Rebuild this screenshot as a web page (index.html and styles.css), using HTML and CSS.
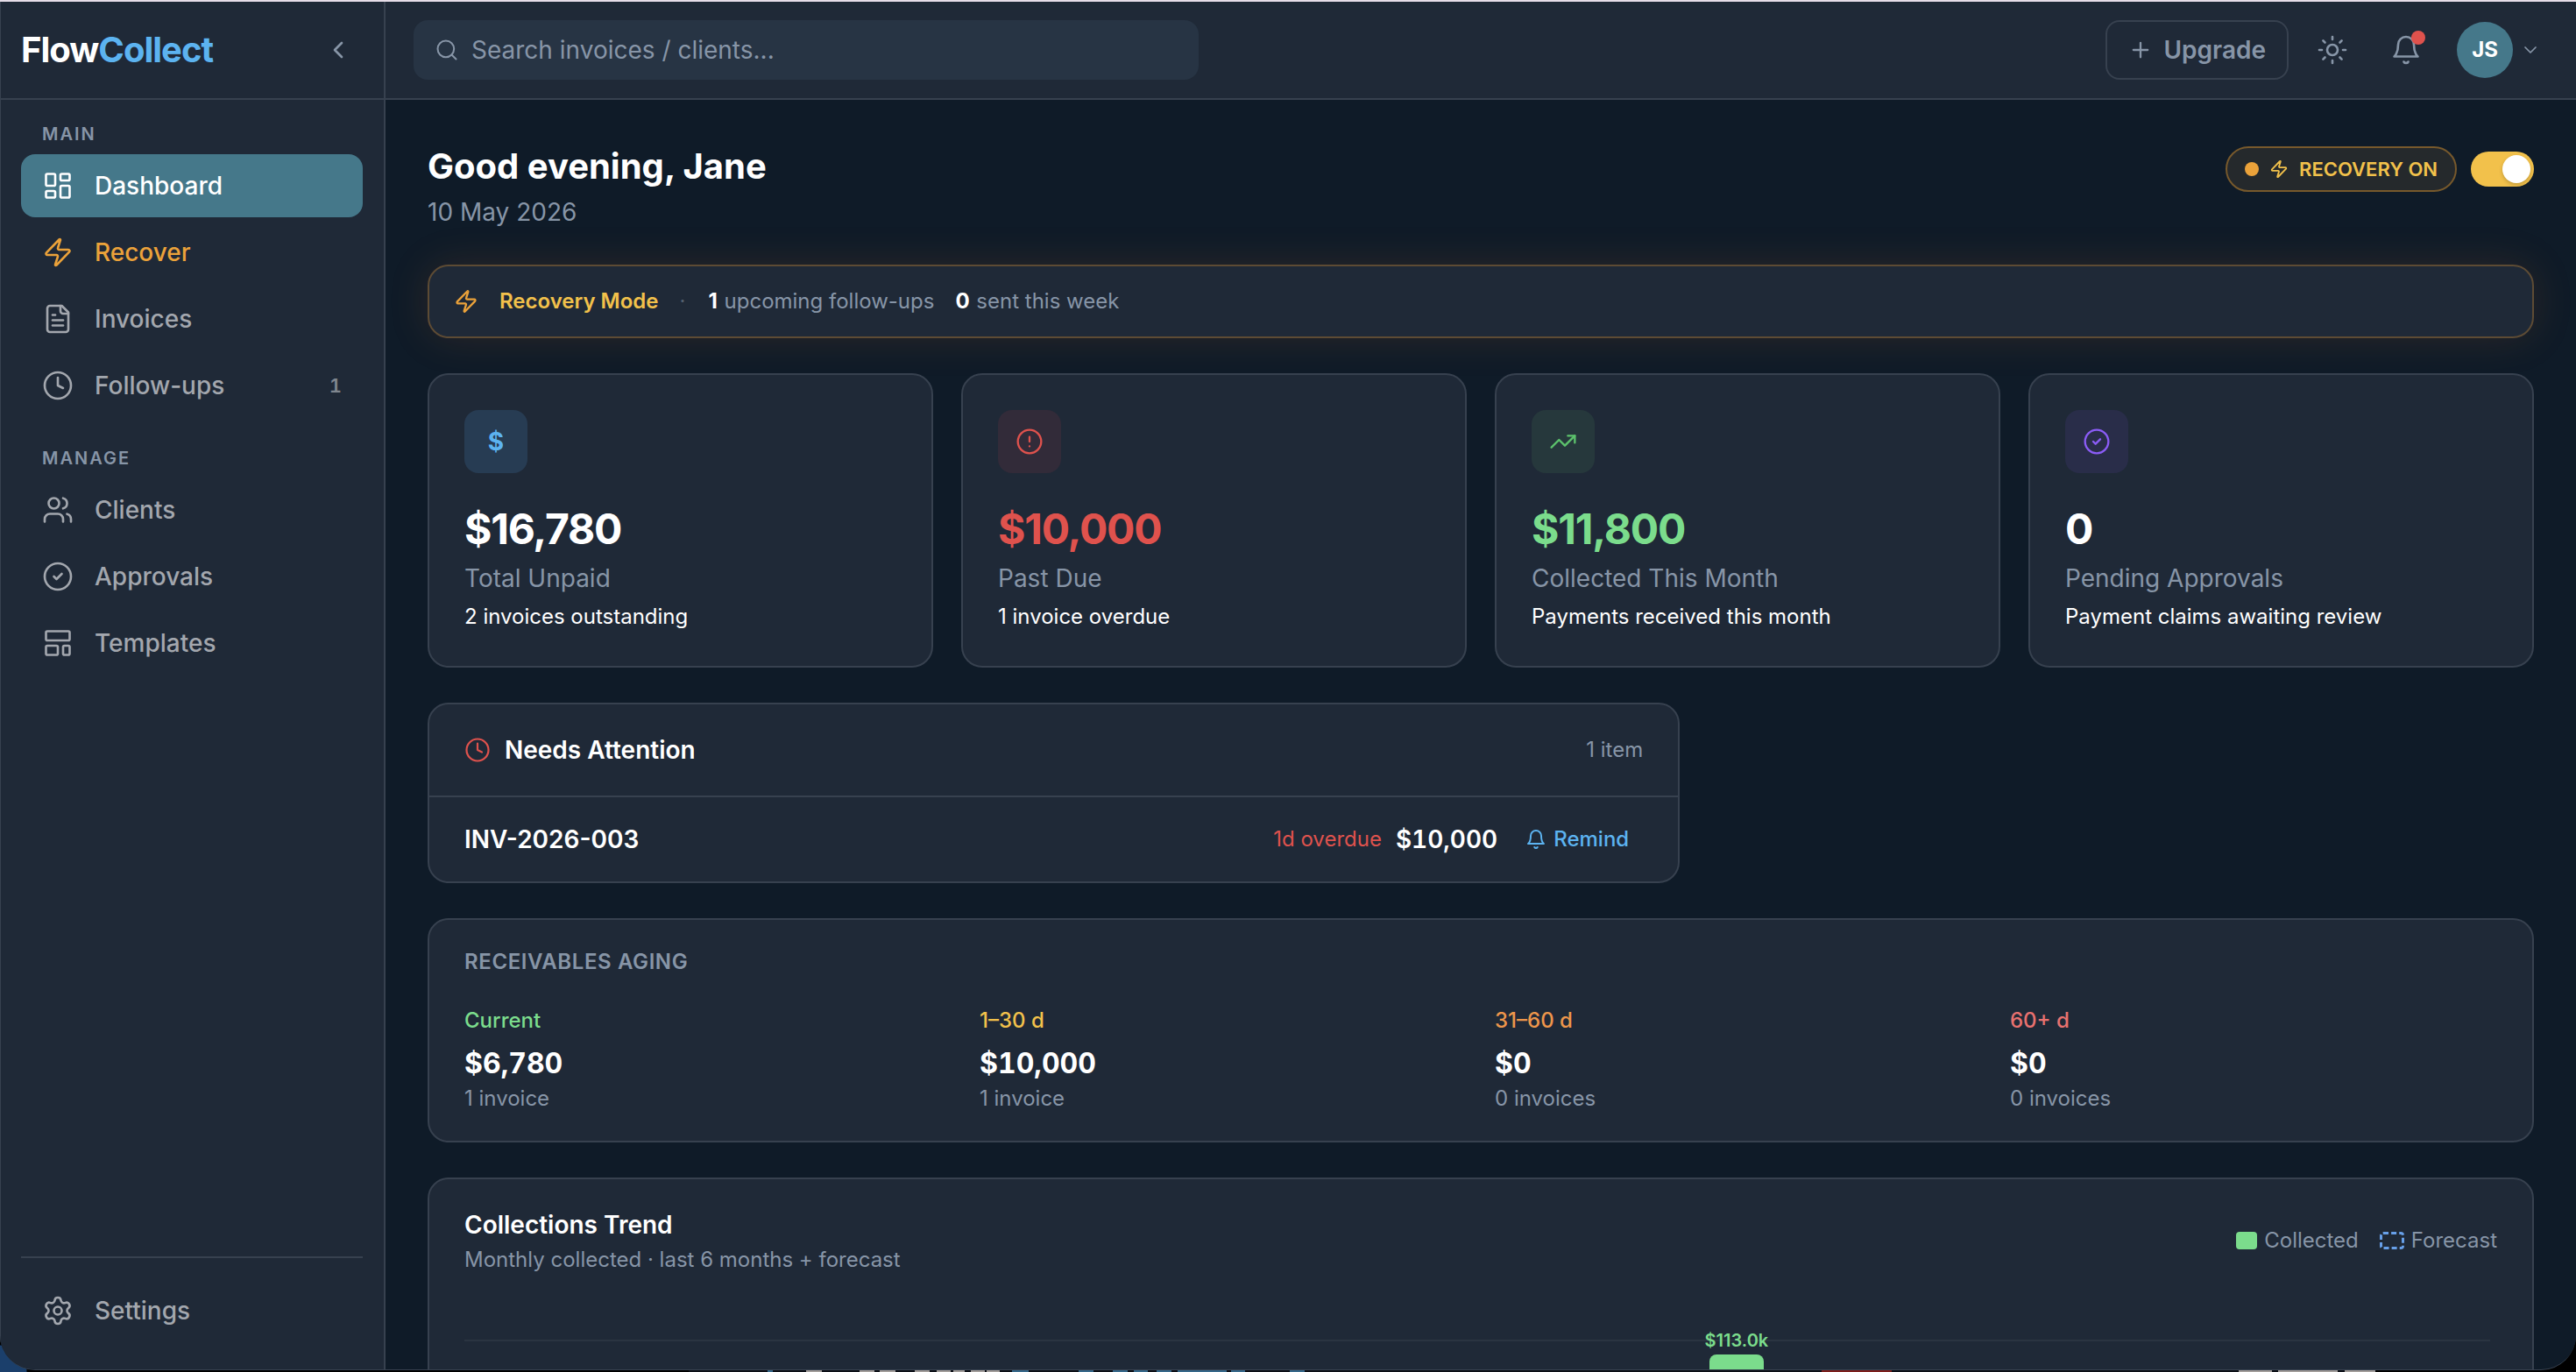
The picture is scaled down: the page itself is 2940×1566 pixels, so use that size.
FILE: index.html
```html
<!DOCTYPE html>
<html lang="en">
<head>
<meta charset="utf-8">
<meta name="viewport" content="width=device-width, initial-scale=1">
<title>FlowCollect – Dashboard</title>
<link rel="stylesheet" href="styles.css">
</head>
<body>
<svg class="sprite" aria-hidden="true">
  <symbol id="i-dashboard" viewBox="0 0 24 24"><rect x="3" y="3" width="7" height="9" rx="1"/><rect x="14" y="3" width="7" height="5" rx="1"/><rect x="14" y="12" width="7" height="9" rx="1"/><rect x="3" y="16" width="7" height="5" rx="1"/></symbol>
  <symbol id="i-zap" viewBox="0 0 24 24"><path d="M4 14a1 1 0 0 1-.78-1.63l9.9-10.2a.5.5 0 0 1 .86.46l-1.92 6.02A1 1 0 0 0 13 10h7a1 1 0 0 1 .78 1.63l-9.9 10.2a.5.5 0 0 1-.86-.46l1.92-6.02A1 1 0 0 0 11 14z"/></symbol>
  <symbol id="i-file" viewBox="0 0 24 24"><path d="M15 2H6a2 2 0 0 0-2 2v16a2 2 0 0 0 2 2h12a2 2 0 0 0 2-2V7Z"/><path d="M14 2v4a2 2 0 0 0 2 2h4"/><path d="M10 9H8"/><path d="M16 13H8"/><path d="M16 17H8"/></symbol>
  <symbol id="i-clock" viewBox="0 0 24 24"><circle cx="12" cy="12" r="10"/><path d="M12 6v6l4 2"/></symbol>
  <symbol id="i-users" viewBox="0 0 24 24"><path d="M16 21v-2a4 4 0 0 0-4-4H6a4 4 0 0 0-4 4v2"/><circle cx="9" cy="7" r="4"/><path d="M22 21v-2a4 4 0 0 0-3-3.87"/><path d="M16 3.13a4 4 0 0 1 0 7.75"/></symbol>
  <symbol id="i-check" viewBox="0 0 24 24"><circle cx="12" cy="12" r="10"/><path d="m9 12 2 2 4-4"/></symbol>
  <symbol id="i-template" viewBox="0 0 24 24"><rect x="3" y="3" width="18" height="7" rx="1"/><rect x="3" y="14" width="9" height="7" rx="1"/><rect x="16" y="14" width="5" height="7" rx="1"/></symbol>
  <symbol id="i-settings" viewBox="0 0 24 24"><path d="M9.671 4.136a2.34 2.34 0 0 1 4.659 0 2.34 2.34 0 0 0 3.319 1.915 2.34 2.34 0 0 1 2.33 4.033 2.34 2.34 0 0 0 0 3.831 2.34 2.34 0 0 1-2.33 4.033 2.34 2.34 0 0 0-3.319 1.915 2.34 2.34 0 0 1-4.659 0 2.34 2.34 0 0 0-3.32-1.915 2.34 2.34 0 0 1-2.33-4.033 2.34 2.34 0 0 0 0-3.831A2.34 2.34 0 0 1 6.35 6.051a2.34 2.34 0 0 0 3.319-1.915"/><circle cx="12" cy="12" r="3"/></symbol>
  <symbol id="i-left" viewBox="0 0 24 24"><path d="m15 18-6-6 6-6"/></symbol>
  <symbol id="i-down" viewBox="0 0 24 24"><path d="m6 9 6 6 6-6"/></symbol>
  <symbol id="i-search" viewBox="0 0 24 24"><circle cx="11" cy="11" r="8"/><path d="m21 21-4.3-4.3"/></symbol>
  <symbol id="i-plus" viewBox="0 0 24 24"><path d="M5 12h14M12 5v14"/></symbol>
  <symbol id="i-sun" viewBox="0 0 24 24"><circle cx="12" cy="12" r="4"/><path d="M12 2v2M12 20v2M4.93 4.93l1.41 1.41M17.66 17.66l1.41 1.41M2 12h2M20 12h2M6.34 17.66l-1.41 1.41M19.07 4.93l-1.41 1.41"/></symbol>
  <symbol id="i-bell" viewBox="0 0 24 24"><path d="M6 8a6 6 0 0 1 12 0c0 7 3 9 3 9H3s3-2 3-9"/><path d="M10.3 21a1.94 1.94 0 0 0 3.4 0"/></symbol>
  <symbol id="i-alert" viewBox="0 0 24 24"><circle cx="12" cy="12" r="10"/><path d="M12 8v4M12 16h.01"/></symbol>
  <symbol id="i-trend" viewBox="0 0 24 24"><path d="m22 7-8.500 8.500-5-5L2 17"/><path d="M16 7h6v6"/></symbol>
</svg>

<div class="window">
  <aside class="sidebar">
    <div class="brand-row">
      <a class="brand" href="#">Flow<span class="brand-accent">Collect</span></a>
      <button class="collapse" type="button" aria-label="Collapse sidebar"><svg class="icon icon-32 bold-stroke"><use href="#i-left"/></svg></button>
    </div>
    <nav class="nav">
      <section class="nav-group">
        <h2 class="nav-title">MAIN</h2>
        <a class="nav-item active" href="#"><svg class="icon icon-36"><use href="#i-dashboard"/></svg>Dashboard</a>
        <a class="nav-item recover" href="#"><svg class="icon icon-36"><use href="#i-zap"/></svg>Recover</a>
        <a class="nav-item" href="#"><svg class="icon icon-36"><use href="#i-file"/></svg>Invoices</a>
        <a class="nav-item" href="#"><svg class="icon icon-36"><use href="#i-clock"/></svg>Follow-ups<span class="count">1</span></a>
      </section>
      <section class="nav-group">
        <h2 class="nav-title">MANAGE</h2>
        <a class="nav-item" href="#"><svg class="icon icon-36"><use href="#i-users"/></svg>Clients</a>
        <a class="nav-item" href="#"><svg class="icon icon-36"><use href="#i-check"/></svg>Approvals</a>
        <a class="nav-item" href="#"><svg class="icon icon-36"><use href="#i-template"/></svg>Templates</a>
      </section>
    </nav>
    <div class="nav-foot">
      <a class="nav-item" href="#"><svg class="icon icon-36"><use href="#i-settings"/></svg>Settings</a>
    </div>
  </aside>

  <div class="page">
    <header class="topbar">
      <label class="search">
        <svg class="icon icon-28"><use href="#i-search"/></svg>
        <input class="search-input" type="text" placeholder="Search invoices / clients..." aria-label="Search invoices or clients">
      </label>
      <div class="actions">
        <button class="upgrade" type="button"><svg class="icon icon-28 bold-stroke"><use href="#i-plus"/></svg>Upgrade</button>
        <button class="icon-btn" type="button" aria-label="Theme"><svg class="icon icon-36"><use href="#i-sun"/></svg></button>
        <button class="icon-btn" type="button" aria-label="Notifications"><svg class="icon icon-36"><use href="#i-bell"/></svg><span class="dot-badge"></span></button>
        <button class="account" type="button" aria-label="Account"><span class="avatar">JS</span><svg class="icon icon-24"><use href="#i-down"/></svg></button>
      </div>
    </header>

    <main class="content">
      <div class="title-row">
        <div>
          <h1 class="greeting">Good evening, Jane</h1>
          <p class="date">10 May 2026</p>
        </div>
        <div class="recovery">
          <span class="pill"><span class="pill-dot"></span><svg class="icon icon-22 bold-stroke"><use href="#i-zap"/></svg>RECOVERY ON</span>
          <input class="switch" type="checkbox" role="switch" aria-label="Recovery mode" checked>
        </div>
      </div>

      <section class="banner">
        <svg class="icon icon-28 bold-stroke amber"><use href="#i-zap"/></svg>
        <strong class="banner-name">Recovery Mode</strong>
        <span class="banner-sep">·</span>
        <span><b>1</b> upcoming follow-ups</span>
        <span><b>0</b> sent this week</span>
      </section>

      <section class="stats">
        <article class="card stat">
          <div class="tile tile-blue">$</div>
          <p class="stat-value">$16,780</p>
          <p class="stat-label">Total Unpaid</p>
          <p class="stat-note">2 invoices outstanding</p>
        </article>
        <article class="card stat">
          <div class="tile tile-red"><svg class="icon icon-32"><use href="#i-alert"/></svg></div>
          <p class="stat-value red">$10,000</p>
          <p class="stat-label">Past Due</p>
          <p class="stat-note">1 invoice overdue</p>
        </article>
        <article class="card stat">
          <div class="tile tile-green"><svg class="icon icon-32"><use href="#i-trend"/></svg></div>
          <p class="stat-value green">$11,800</p>
          <p class="stat-label">Collected This Month</p>
          <p class="stat-note">Payments received this month</p>
        </article>
        <article class="card stat">
          <div class="tile tile-violet"><svg class="icon icon-32"><use href="#i-check"/></svg></div>
          <p class="stat-value">0</p>
          <p class="stat-label">Pending Approvals</p>
          <p class="stat-note">Payment claims awaiting review</p>
        </article>
      </section>

      <section class="card attention">
        <div class="attention-head">
          <svg class="icon icon-30 red"><use href="#i-clock"/></svg>
          <h2 class="card-title">Needs Attention</h2>
          <span class="push muted">1 item</span>
        </div>
        <div class="attention-row">
          <a class="invoice" href="#">INV-2026-003</a>
          <span class="push red">1d overdue</span>
          <span class="amount">$10,000</span>
          <button class="remind" type="button"><svg class="icon icon-24 bold-stroke"><use href="#i-bell"/></svg>Remind</button>
        </div>
      </section>

      <section class="card aging">
        <h2 class="aging-title">RECEIVABLES AGING</h2>
        <div class="aging-grid">
          <div><p class="bucket green">Current</p><p class="bucket-value">$6,780</p><p class="muted">1 invoice</p></div>
          <div><p class="bucket yellow">1–30 d</p><p class="bucket-value">$10,000</p><p class="muted">1 invoice</p></div>
          <div><p class="bucket orange">31–60 d</p><p class="bucket-value">$0</p><p class="muted">0 invoices</p></div>
          <div><p class="bucket rose">60+ d</p><p class="bucket-value">$0</p><p class="muted">0 invoices</p></div>
        </div>
      </section>

      <section class="card trend">
        <div class="trend-head">
          <div>
            <h2 class="card-title">Collections Trend</h2>
            <p class="trend-sub">Monthly collected · last 6 months + forecast</p>
          </div>
          <ul class="legend">
            <li class="legend-item"><span class="swatch"></span>Collected</li>
            <li class="legend-item"><span class="swatch-dashed"></span>Forecast</li>
          </ul>
        </div>
        <div class="chart">
          <div class="bar" style="left: 62.8%"><span class="bar-value">$113.0k</span><span class="bar-fill"></span></div>
        </div>
      </section>
    </main>
  </div>
</div>

<!-- Sliver of the desktop below the app window -->
<svg class="desktop-edge" viewBox="0 0 2940 2" preserveAspectRatio="none" aria-hidden="true">
  <rect class="edge-dark" x="786" width="1900" height="2"/>
  <path class="edge-grey" d="M920 0h18v2h-18zM981 0h17v2h-17zM1004 0h18v2h-18zM1044 0h17v2h-17zM1069 0h16v2h-16zM1088 0h13v2h-13zM1108 0h16v2h-16zM1126 0h15v2h-15zM2555 0h38v2h-38zM2600 0h68v2h-68zM2676 0h35v2h-35z"/>
  <path class="edge-blue" d="M876 0h6v2h-6zM1155 0h19v2h-19zM1231 0h17v2h-17zM1270 0h17v2h-17zM1294 0h16v2h-16zM1320 0h17v2h-17zM1344 0h56v2h-56zM1405 0h16v2h-16zM1472 0h17v2h-17z"/>
  <rect class="edge-red" x="2079" width="80" height="2"/>
</svg>
</body>
</html>
```
FILE: styles.css
```css
:root {
  --bg: #0f1b28;
  --surface: #1f2937;
  --line: #37414f;
  --muted: #8795a7;
  --nav: #a3a7ae;
  --white: #ffffff;
  --teal: #45788a;
  --blue: #5cb3f0;
  --amber: #eba23a;
  --yellow: #f2c14b;
  --red: #df524d;
  --green: #7bdc8c;
}

* { box-sizing: border-box; }

body {
  display: flex;
  flex-direction: column;
  margin: 0;
  height: 100vh;
  padding-top: 2px;
  overflow: hidden;
  background:
    linear-gradient(#e6dde8 0 2px, transparent 2px),
    radial-gradient(circle at left bottom, #1b3f6b 0 30px, transparent 31px),
    #000000;
  color: var(--white);
  font: 400 24px/32px Inter, "Liberation Sans", sans-serif;
}

h1, h2, p, ul { margin: 0; padding: 0; }
button { border: 0; background: none; color: inherit; font: inherit; padding: 0; cursor: pointer; }
a { color: inherit; text-decoration: none; }

.sprite { display: none; }
.icon { flex: none; fill: none; stroke: currentColor; stroke-width: 1.75; stroke-linecap: round; stroke-linejoin: round; }
.bold-stroke { stroke-width: 2; }
.icon-22 { width: 22px; height: 22px; }
.icon-24 { width: 24px; height: 24px; }
.icon-28 { width: 28px; height: 28px; }
.icon-30 { width: 30px; height: 30px; }
.icon-32 { width: 32px; height: 32px; }
.icon-36 { width: 36px; height: 36px; }

.red { color: var(--red); }
.green { color: var(--green); }
.yellow { color: var(--yellow); }
.orange { color: #ee964b; }
.rose { color: #e9716f; }
.amber { color: var(--amber); }
.muted { color: var(--muted); }
.push { margin-left: auto; }

.window {
  flex: 1;
  min-height: 0;
  display: flex;
  overflow: hidden;
  border-bottom: 1px solid var(--line);
  border-radius: 0 0 40px 40px;
  background: var(--bg);
}

.desktop-edge { flex: none; display: block; width: 100%; height: 2px; }
.edge-dark { fill: #0c0f16; }
.edge-grey { fill: #a39e9b; }
.edge-blue { fill: #35688a; }
.edge-red { fill: #7c1d1a; }

/* Sidebar */
.sidebar {
  flex: none;
  display: flex;
  flex-direction: column;
  width: 440px;
  border-right: 2px solid var(--line);
  background: var(--surface);
  box-shadow: inset 1px 0 0 var(--line);
}
.brand-row {
  display: flex;
  align-items: center;
  justify-content: space-between;
  height: 112px;
  padding: 0 24px;
  border-bottom: 2px solid var(--line);
}
.brand { font-size: 40px; line-height: 48px; font-weight: 700; letter-spacing: -0.025em; }
.brand-accent { color: var(--blue); }
.collapse { display: flex; padding: 12px; color: var(--muted); }
.nav { flex: 1; padding: 24px; }
.nav-group { display: flex; flex-direction: column; gap: 4px; margin-bottom: 32px; }
.nav-title {
  padding: 0 24px 4px;
  color: var(--muted);
  font-size: 20px;
  line-height: 30px;
  font-weight: 600;
  letter-spacing: 2px;
}
.nav-item {
  display: flex;
  align-items: center;
  gap: 24px;
  height: 72px;
  padding: 0 24px;
  border-radius: 16px;
  color: var(--nav);
  font-size: 28px;
  line-height: 40px;
  font-weight: 500;
}
.nav-item.active { background: var(--teal); color: var(--white); }
.nav-item.recover { color: var(--amber); }
.count { margin-left: auto; color: #7f868f; font-size: 22px; font-weight: 600; font-variant-numeric: tabular-nums; }
.nav-foot { margin: 0 24px; padding: 24px 0 31px; border-top: 2px solid var(--line); }

/* Top bar */
.page { flex: 1; min-width: 0; display: flex; flex-direction: column; }
.topbar {
  flex: none;
  display: flex;
  align-items: center;
  justify-content: space-between;
  height: 112px;
  padding: 0 32px;
  border-bottom: 2px solid var(--line);
  background: var(--surface);
}
.search {
  display: flex;
  align-items: center;
  gap: 14px;
  flex: 0 1 896px;
  height: 68px;
  padding: 0 24px;
  border-radius: 16px;
  background: #273444;
  color: var(--muted);
}
.search-input {
  flex: 1;
  min-width: 0;
  padding: 0;
  border: 0;
  outline: 0;
  background: none;
  color: var(--white);
  font: inherit;
  font-size: 28px;
  line-height: 40px;
}
.search-input::placeholder { color: var(--muted); opacity: 1; }
.actions { display: flex; align-items: center; gap: 16px; color: var(--muted); }
.upgrade {
  display: flex;
  align-items: center;
  gap: 12px;
  height: 68px;
  padding: 0 24px;
  border: 2px solid var(--line);
  border-radius: 16px;
  font-size: 28px;
  font-weight: 600;
}
.icon-btn { position: relative; display: flex; padding: 16px; }
.dot-badge { position: absolute; top: 12px; right: 12px; width: 16px; height: 16px; border-radius: 50%; background: var(--red); }
.account { display: flex; align-items: center; gap: 8px; padding: 0 8px; }
.avatar {
  display: grid;
  place-items: center;
  width: 64px;
  height: 64px;
  border-radius: 50%;
  background: var(--teal);
  color: var(--white);
  font-weight: 700;
}

/* Content */
.content {
  flex: 1;
  min-height: 0;
  overflow: hidden;
  display: flex;
  flex-direction: column;
  gap: 40px;
  padding: 48px;
}
.content > * { flex: none; }
.title-row { display: flex; justify-content: space-between; align-items: flex-start; }
.greeting { font-size: 40px; line-height: 56px; font-weight: 700; }
.date { margin-top: 4px; color: var(--muted); font-size: 28px; line-height: 40px; }
.recovery { display: flex; align-items: center; gap: 16px; padding-top: 5px; }
.pill {
  display: flex;
  align-items: center;
  gap: 12px;
  height: 52px;
  padding: 0 20px;
  border: 2px solid #77592c;
  border-radius: 26px;
  background: #25292c;
  color: var(--yellow);
  font-size: 22px;
  font-weight: 600;
}
.pill-dot { width: 16px; height: 16px; border-radius: 50%; background: var(--amber); }
.switch {
  appearance: none;
  width: 72px;
  height: 40px;
  margin: 0;
  padding: 4px;
  border-radius: 20px;
  background: var(--muted);
}
.switch::before {
  content: "";
  display: block;
  width: 32px;
  height: 32px;
  border-radius: 50%;
  background: var(--white);
  box-shadow: 0 2px 4px rgba(0, 0, 0, 0.2);
}
.switch:checked { background: var(--yellow); }
.switch:checked::before { margin-left: auto; }

.banner {
  display: flex;
  align-items: center;
  gap: 24px;
  height: 84px;
  padding: 0 28px;
  border: 2px solid #5d4b34;
  border-radius: 24px;
  background: var(--surface);
  box-shadow: 0 0 48px rgba(240, 120, 50, 0.13);
  color: var(--muted);
}
.banner-name { color: var(--yellow); font-weight: 600; }
.banner-sep { margin-right: 2px; color: #556070; }
.banner b { margin-right: 1px; color: var(--white); font-weight: 700; }

.card { border: 2px solid var(--line); border-radius: 24px; background: var(--surface); }
.card-title { font-size: 28px; line-height: 40px; font-weight: 600; }

.stats { display: grid; grid-template-columns: repeat(4, 1fr); gap: 32px; }
.stat { padding: 40px; }
.tile { display: grid; place-items: center; width: 72px; height: 72px; border-radius: 16px; font-size: 28px; font-weight: 700; }
.tile-blue { background: #273c53; color: var(--blue); }
.tile-red { background: #322b39; color: var(--red); }
.tile-green { background: #26383c; color: #5cc26c; }
.tile-violet { background: #292d49; color: #8b5cf6; }
.stat-value { margin: 32px 0 4px; font-size: 48px; line-height: 64px; font-weight: 700; letter-spacing: -0.025em; }
.stat-label { color: var(--muted); font-size: 28px; line-height: 40px; }
.stat-note { margin-top: 8px; }

.attention { width: 59.45%; }
.attention-head { display: flex; align-items: center; gap: 16px; height: 106px; padding: 0 40px; border-bottom: 2px solid var(--line); }
.attention-row { display: flex; align-items: center; gap: 16px; height: 96px; padding: 0 40px; }
.invoice { font-size: 28px; font-weight: 600; }
.amount { font-size: 28px; font-weight: 600; font-variant-numeric: tabular-nums; }
.remind { display: flex; align-items: center; gap: 8px; padding: 0 16px; color: var(--blue); font-weight: 500; }

.aging { padding: 32px 40px; }
.aging-title { color: var(--muted); font-size: 24px; line-height: 32px; font-weight: 600; letter-spacing: 0.025em; }
.aging-grid { display: grid; grid-template-columns: repeat(4, 1fr); gap: 32px; margin-top: 35px; }
.bucket { font-weight: 500; }
.bucket-value { margin: 11px 0 2px; font-size: 32px; line-height: 44px; font-weight: 700; font-variant-numeric: tabular-nums; }

.trend { padding: 32px 40px; }
.trend-head { display: flex; align-items: center; justify-content: space-between; }
.trend-sub { margin-top: 4px; color: var(--muted); }
.legend { display: flex; gap: 24px; list-style: none; color: var(--muted); }
.legend-item { display: flex; align-items: center; gap: 8px; }
.swatch { width: 24px; height: 20px; border-radius: 4px; background: var(--green); }
.swatch-dashed { width: 28px; height: 20px; border: 3px dashed #679fe8; border-radius: 4px; }
.chart { position: relative; height: 360px; margin: 75px 8px 0 0; border-top: 2px solid #2a3441; }
.bar {
  position: absolute;
  top: -17px;
  bottom: 0;
  display: flex;
  flex-direction: column;
  align-items: center;
  width: 72px;
  margin-left: -36px;
}
.bar-value { color: var(--green); font-size: 20px; font-weight: 600; }
.bar-fill { flex: 1; width: 62px; border-radius: 8px 8px 0 0; background: var(--green); }
```
